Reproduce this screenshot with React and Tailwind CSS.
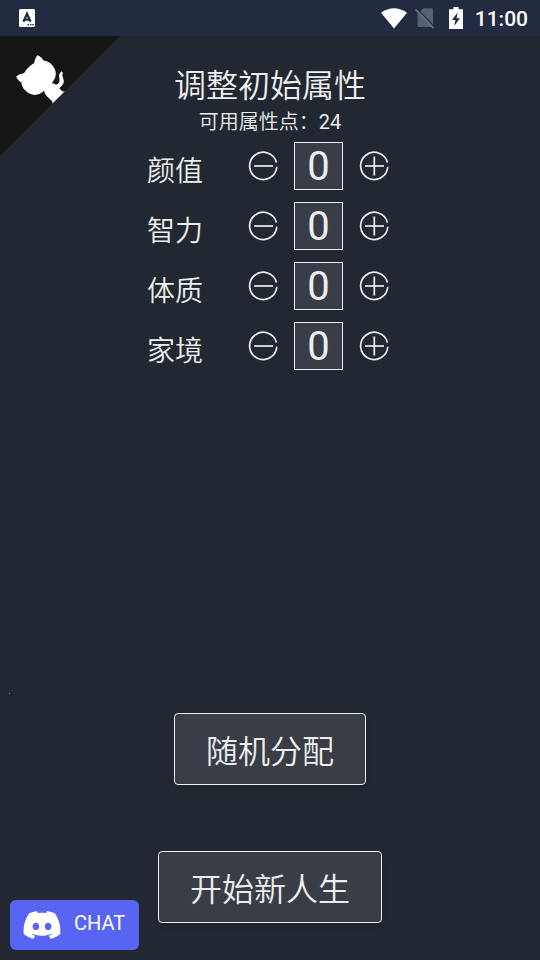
import React, { useState } from 'react';
import { FaDiscord } from 'react-icons/fa';

const attributes = [
  { key: 'appearance', label: '颜值' },
  { key: 'intelligence', label: '智力' },
  { key: 'strength', label: '体质' },
  { key: 'money', label: '家境' },
];

const TOTAL = 24;

const StatusBar = () => (
  <header className="flex h-9 items-center justify-between bg-[#222b40] pl-[19px] pr-3 text-white">
    <svg viewBox="0 0 16 18" className="h-[18px] w-4" aria-hidden="true">
      <rect width="16" height="18" rx="1.5" fill="#fff" />
      <path d="M4.4 12.8 8 4.8l3.6 8M5.6 10.6h4.8" fill="none" stroke="#222b40" strokeWidth="2.2" />
      <path d="M8.5 15h1.4v1.4H8.5zM11 15h1.4v1.4H11zM13.3 15h1.4v1.4h-1.4z" fill="#222b40" />
    </svg>
    <div className="flex items-center">
      <svg viewBox="0 0 26 21" className="h-[21px] w-[26px]" aria-hidden="true">
        <path d="M0 4.8C8-1.4 18-1.4 26 4.8L13 20.5z" fill="#fff" />
      </svg>
      <svg viewBox="0 0 20 22" className="ml-2 h-[22px] w-5" aria-hidden="true">
        <path d="M8.4 1.2H17q1 0 1 1V19q0 1-1 1H3.6q-1 0-1-1V7z" fill="#596073" />
        <path d="M1.6 1.4 19.8 20.2" stroke="#222b40" strokeWidth="1.4" />
        <path d="M.6 2.4 18.8 21.2" stroke="#697083" strokeWidth="1.6" />
      </svg>
      <svg viewBox="0 0 14 22" className="ml-3.5 h-[22px] w-[14px]" aria-hidden="true">
        <path d="M4.4 0h5.2v2.2H14V22H0V2.2h4.4z" fill="#fff" />
        <path d="M8.6 5.6 3 13h3.4l-1.2 6L11 11.2H7.6z" fill="#222b40" />
      </svg>
      <span className="ml-3 pt-0.5 text-[21px] font-medium leading-6">11:00</span>
    </div>
  </header>
);

const GithubCorner = () => (
  <a href="#github" aria-label="GitHub" className="absolute left-0 top-0">
    <svg viewBox="0 0 250 250" className="h-[120px] w-[120px] -scale-x-100" fill="#151513" aria-hidden="true">
      <path d="M0,0 L115,115 L130,115 L142,142 L250,250 L250,0 Z" />
      <path
        d="M128.3,109.0 C113.8,99.7 119.0,89.6 119.0,89.6 C122.0,82.7 120.5,78.6 120.5,78.6 C119.2,72.0 123.4,76.3 123.4,76.3 C127.3,80.9 125.5,87.3 125.5,87.3 C122.9,97.6 130.6,101.9 134.4,103.2"
        fill="#fff"
        stroke="#fff"
        strokeWidth="2"
      />
      <path
        d="M115.0,115.0 C114.9,115.1 118.7,116.5 119.8,115.4 L133.7,101.6 C136.9,99.2 139.9,98.4 142.2,98.6 C133.8,88.0 127.5,74.4 143.8,58.0 C148.5,53.4 154.0,51.2 159.7,51.0 C160.3,49.4 163.2,43.6 171.4,40.1 C171.4,40.1 176.1,42.5 178.8,56.2 C183.1,58.6 187.2,61.8 190.9,65.4 C194.5,69.0 197.7,73.2 200.1,77.6 C213.8,80.2 216.3,84.9 216.3,84.9 C212.7,93.1 206.9,96.0 205.4,96.6 C205.1,102.4 203.0,107.8 198.3,112.5 C181.9,128.9 168.3,122.5 157.7,114.1 C157.9,116.9 156.7,120.9 152.7,124.9 L141.0,136.5 C139.8,137.7 141.6,141.9 141.8,141.8 Z"
        fill="#fff"
      />
    </svg>
  </a>
);

const StepButton = ({ plus, label, onClick }) => (
  <button type="button" aria-label={label} onClick={onClick} className="h-[30px] w-[30px] cursor-pointer">
    <svg viewBox="0 0 30 30" className="h-[30px] w-[30px]" fill="none" stroke="#eee" strokeWidth="1.7">
      <path d="M28.4 11.5A13.6 13.6 0 1 0 28.8 15.8" />
      <path d="M6 15h19" />
      {plus && <path d="M15.3 5.5v19" />}
    </svg>
  </button>
);

const MenuButton = ({ children, onClick }) => (
  <button
    type="button"
    onClick={onClick}
    className="h-[72px] cursor-pointer rounded border border-[#eee] bg-[#393e46] px-[31px] pt-1.5 text-[32px] font-[350] shadow-md"
  >
    {children}
  </button>
);

const App = () => {
  const [values, setValues] = useState({ appearance: 0, intelligence: 0, strength: 0, money: 0 });
  const used = Object.values(values).reduce((sum, n) => sum + n, 0);

  const change = (key, next) => {
    const max = Math.min(10, values[key] + TOTAL - used);
    setValues({ ...values, [key]: Math.max(0, Math.min(max, next || 0)) });
  };

  const randomize = () => {
    const next = { appearance: 0, intelligence: 0, strength: 0, money: 0 };
    let left = TOTAL;
    while (left > 0) {
      const { key } = attributes[Math.floor(Math.random() * attributes.length)];
      if (next[key] < 10) {
        next[key] += 1;
        left -= 1;
      }
    }
    setValues(next);
  };

  return (
    <div className="flex min-h-screen flex-col bg-[#222831] font-[Roboto,'Noto_Sans_CJK_SC',sans-serif] text-[#eee]">
      <StatusBar />
      <main className="relative flex flex-1 flex-col items-center pb-[37px] pt-[26px]">
        <GithubCorner />
        <h1 className="text-[32px] font-[350] leading-[48px]">调整初始属性</h1>
        <p className="text-xl font-[350] leading-6">
          可用属性点：<span className="font-normal">{TOTAL - used}</span>
        </p>

        <ul className="mr-1 mt-2 flex flex-col gap-3">
          {attributes.map(({ key, label }) => (
            <li key={key} className="flex items-center">
              <label htmlFor={key} className="mr-[45px] pt-3 text-[28px] font-[350] leading-9">
                {label}
              </label>
              <StepButton label={`${label} -`} onClick={() => change(key, values[key] - 1)} />
              <input
                id={key}
                inputMode="numeric"
                value={values[key]}
                onChange={(e) => change(key, parseInt(e.target.value, 10))}
                className="mx-4 h-12 w-[49px] border border-[#eee] bg-[#393e46] text-center text-[40px] leading-10"
              />
              <StepButton plus label={`${label} +`} onClick={() => change(key, values[key] + 1)} />
            </li>
          ))}
        </ul>

        <div className="mt-auto flex flex-col items-center gap-[66px]">
          <MenuButton onClick={randomize}>随机分配</MenuButton>
          <MenuButton>开始新人生</MenuButton>
        </div>
      </main>

      <a
        href="#chat"
        className="fixed bottom-2.5 left-2.5 flex h-[50px] items-center gap-3 rounded-md bg-[#5865f2] pl-3 pr-3.5 text-xl text-white"
      >
        <FaDiscord className="h-10 w-10" />
        <span className="pb-1">CHAT</span>
      </a>
      <span className="fixed bottom-[266px] left-[9px] size-px bg-teal-500" />
    </div>
  );
};

export default App;
